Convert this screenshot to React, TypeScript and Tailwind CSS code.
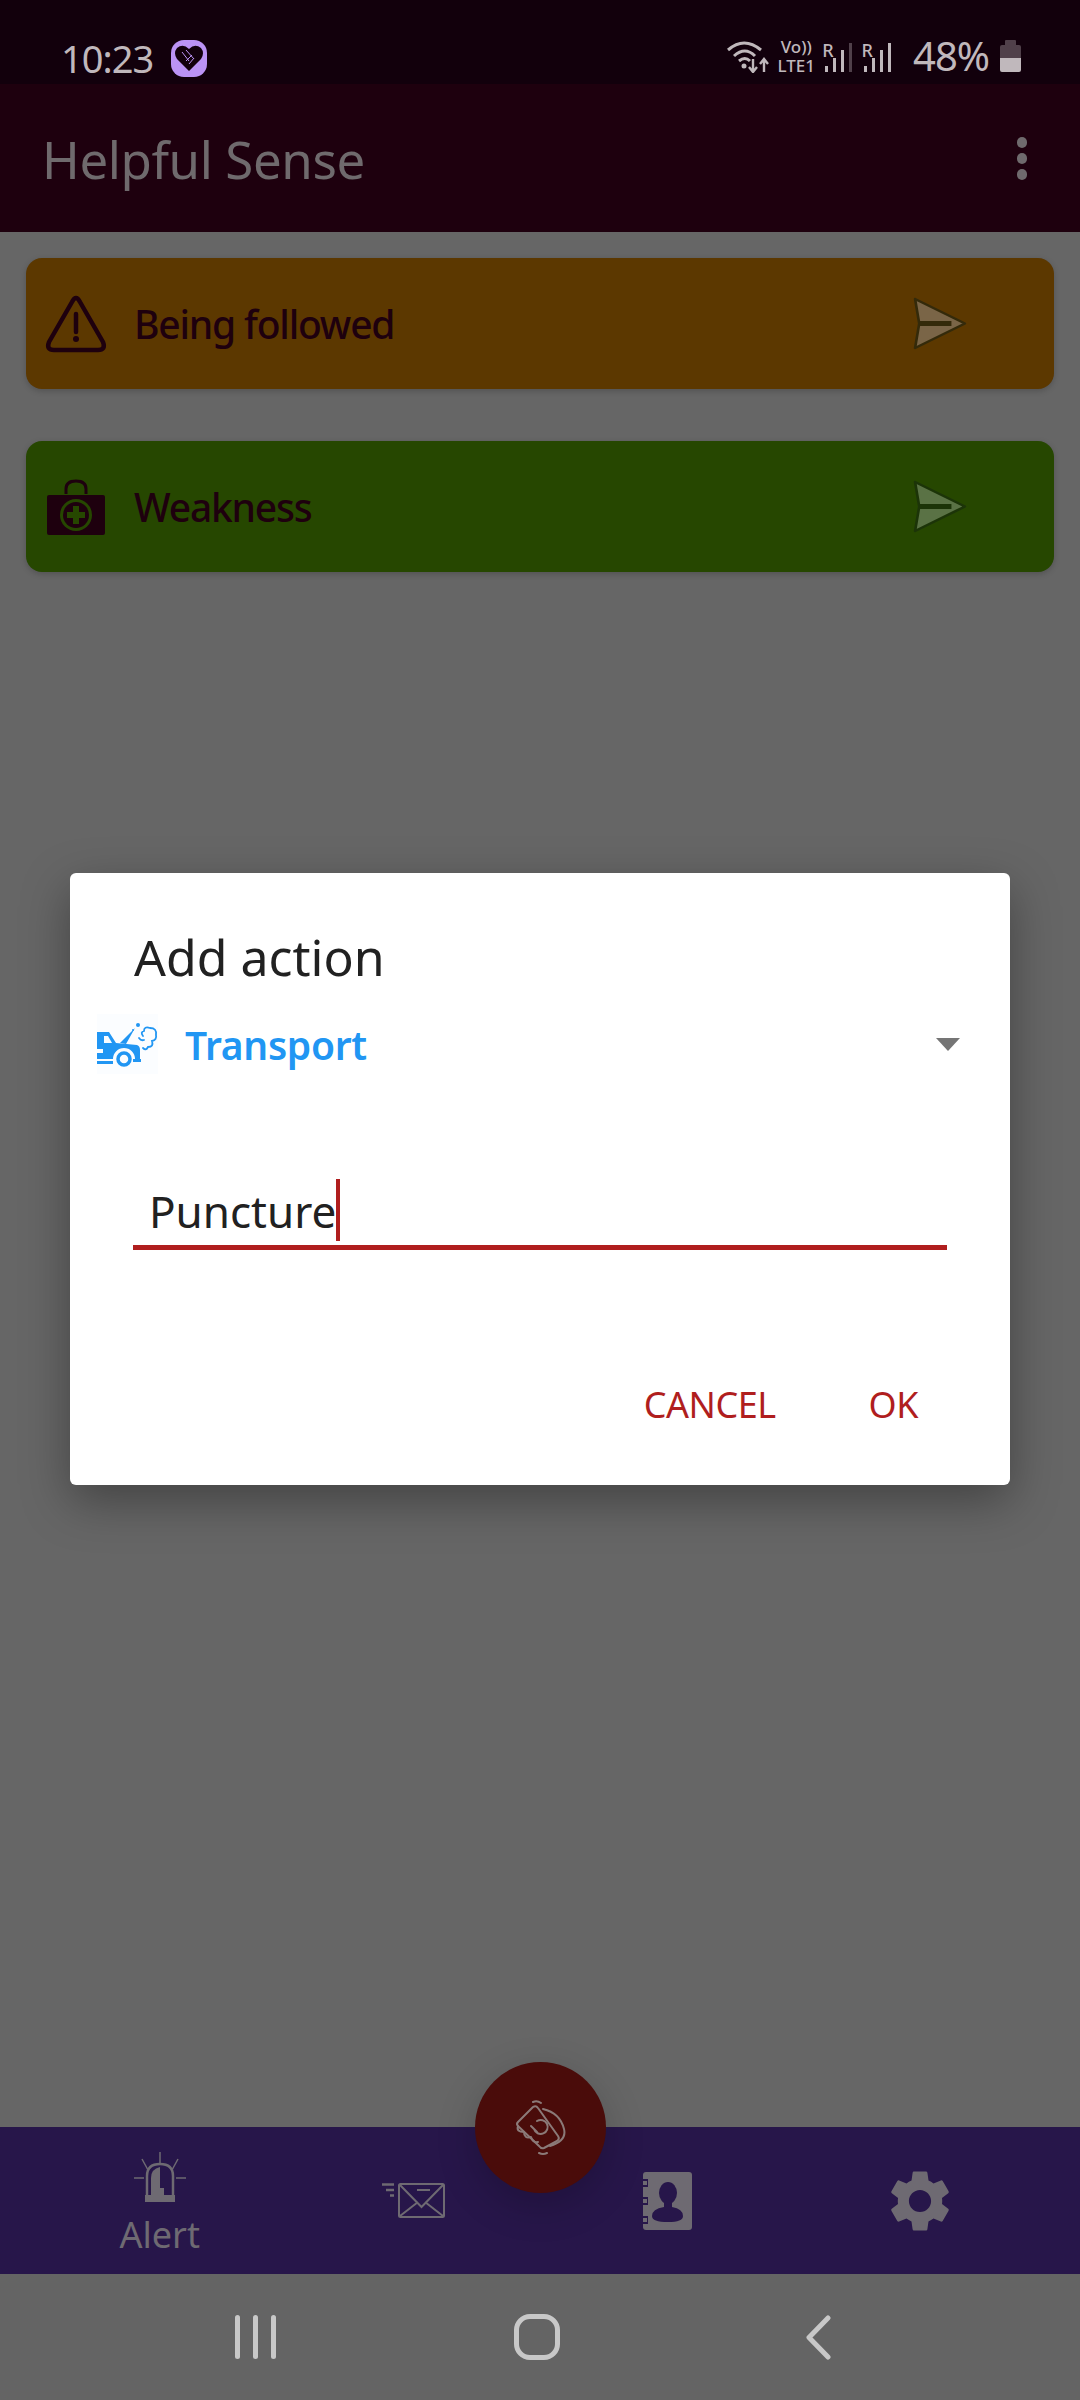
import { MdSettings } from 'react-icons/md'

const FONT = "font-['Noto_Sans',sans-serif]"

const SendIcon = ({ fill, stroke }: { fill: string; stroke: string }) => (
  <svg width="54" height="53" viewBox="0 0 52 53" preserveAspectRatio="none">
    <path d="M2 2 L50 26.5 L2 51 L6 26.5 Z" fill={fill} stroke={stroke} strokeWidth="2.5" strokeLinejoin="round" />
    <path d="M6 26.5 H37" stroke={stroke} strokeWidth="5" />
  </svg>
)

const WarningIcon = () => (
  <svg width="62" height="58" viewBox="0 0 62 58" fill="none">
    <path d="M31 3 Q33 3 35 7 L58 47 Q61 55 53 55 H9 Q1 55 4 47 L27 7 Q29 3 31 3 Z" stroke="#1e000e" strokeWidth="4.5" strokeLinejoin="round" />
    <path d="M31 19 V37" stroke="#1e000e" strokeWidth="4.5" strokeLinecap="round" />
    <circle cx="31" cy="44" r="3" fill="#1e000e" />
  </svg>
)

const MedicalIcon = () => (
  <svg width="60" height="56" viewBox="0 0 60 56" fill="none">
    <path d="M20 15 V10 Q20 2 30 2 Q40 2 40 10 V15" stroke="#1e000e" strokeWidth="3" />
    <rect x="1" y="16" width="58" height="40" rx="2" fill="#1e000e" />
    <circle cx="30" cy="36" r="16" fill="#264700" />
    <circle cx="30" cy="36" r="13" fill="#1e000e" />
    <path d="M30 27 V45 M21 36 H39" stroke="#264700" strokeWidth="6" />
  </svg>
)

const CarIcon = () => (
  <svg width="61" height="60" viewBox="0 0 61 60" fill="none" className="bg-[#fbfdff]">
    <path d="M0 18 H12 L19 29 L40 31 Q43 32 43 36 V45 H38 A11 11 0 0 0 16 45 H0 V39 H6 V35 H0 Z" fill="#2196f3" />
    <path d="M7 22 H11 L15 29 H7 Z" fill="#fbfdff" />
    <path d="M0 47 H16 V50 H0 Z M36 45 H44 V48 H36 Z" fill="#2196f3" />
    <circle cx="27" cy="45" r="6" stroke="#2196f3" strokeWidth="3.5" />
    <path d="M23 29 L38 14 L29 30 Z" fill="#2196f3" />
    <circle cx="41" cy="11" r="2" fill="#2196f3" />
    <circle cx="36" cy="16" r="1" fill="#2196f3" />
    <path d="M46 22 Q43 18 47 17 Q47 12 53 14 Q60 14 59 21 Q60 26 55 27 Q57 33 51 33 Q49 37 46 34 M42 24 Q44 27 47 26" stroke="#2196f3" strokeWidth="1.8" strokeLinecap="round" />
  </svg>
)

const SirenIcon = () => (
  <svg width="52" height="50" viewBox="0 0 52 50" fill="none" stroke="#6e6a72">
    <path d="M26 0 V12 M8 7 L14 18 M44 7 L38 18 M0 26 H10 M42 26 H52" strokeWidth="1.5" />
    <path d="M13 43 V24 Q13 12 26 12 Q39 12 39 24 V43" strokeWidth="2.5" fill="#27164a" />
    <path d="M17 43 V26 Q17 17 26 15 V36 H30 V43 Z" fill="#6e6a72" stroke="none" />
    <rect x="11" y="43" width="30" height="7" fill="#6e6a72" stroke="none" />
  </svg>
)

const MailIcon = () => (
  <svg width="63" height="35" viewBox="0 0 63 35" fill="none" stroke="#6e6a72">
    <rect x="17" y="1" width="45" height="33" rx="1.5" strokeWidth="2" />
    <path d="M18 2 L39.5 24 L61 2 M18 33 L36 19 M61 33 L43 19 M35 7 H48" strokeWidth="2" />
    <path d="M0 1.5 H12 M4 7 H12 M8 12.5 H12" strokeWidth="2.5" />
  </svg>
)

const ContactsIcon = () => (
  <svg width="50" height="60" viewBox="0 0 50 60">
    <rect x="1" y="1" width="49" height="58" rx="3" fill="#6e6a72" />
    <path d="M0 8 H6 V16 H0 Z M0 26 H6 V34 H0 Z M0 45 H6 V53 H0 Z" fill="#27164a" />
    <rect x="1" y="10" width="4" height="4" fill="#6e6a72" />
    <rect x="1" y="28" width="4" height="4" fill="#6e6a72" />
    <rect x="1" y="47" width="4" height="4" fill="#6e6a72" />
    <ellipse cx="26" cy="22" rx="9" ry="11" fill="#27164a" />
    <path d="M22 30 H30 V36 Q41 38 41 45 Q41 51 26 51 Q10 51 10 45 Q10 38 22 36 Z" fill="#27164a" />
  </svg>
)

const ShakeIcon = () => (
  <svg width="54" height="58" viewBox="0 0 54 58" fill="none" stroke="#8b7a78" strokeWidth="2" strokeLinecap="round" strokeLinejoin="round">
    <path d="M19 3 Q23 1 27 4 M25 54 Q29 56 33 54" />
    <path d="M4 23 L19 8 Q22 6 24 9 L44 37 Q46 40 43 42 L30 49 Q27 50 25 47 L4 27 Q2 25 4 23 Z" />
    <path d="M29 10 Q46 14 50 30 Q53 42 36 47" />
    <path d="M4 27 Q2 33 10 33 Q10 40 17 38 Q19 44 24 43" />
    <path d="M23 22 A7 7 0 1 1 20 30 M20 30 L17 27 M20 30 L23 33" />
  </svg>
)

const HandshakeBadge = () => (
  <div className="flex h-[37px] w-[36px] items-center justify-center rounded-[13px] bg-[#bb93f5]">
    <svg width="30" height="30" viewBox="0 0 30 30">
      <path d="M15 28 L3 16 Q-1 10 3 5 Q9 0 15 6 Q21 0 27 5 Q31 10 27 16 Z" fill="#12000c" />
      <path d="M8 9 L15 18 M12 7 L20 16 M15 21 L20 15 M12 18 L18 12" stroke="#bb93f5" strokeWidth="1" fill="none" />
    </svg>
  </div>
)

const SignalBars = ({ dimLast }: { dimLast?: boolean }) => (
  <div className="ml-[-9px] flex items-end gap-[5px]">
    <div className="h-[6px] w-[3px] bg-[#c0b8bc]" />
    <div className="h-[14px] w-[3px] bg-[#c0b8bc]" />
    <div className="h-[22px] w-[3px] bg-[#c0b8bc]" />
    <div className={`h-[29px] w-[3px] ${dimLast ? 'bg-[#50404a]' : 'bg-[#c0b8bc]'}`} />
  </div>
)

const StatusBar = () => (
  <div className="flex h-[84px] items-center justify-between bg-[#12000c] pt-[32px] pr-[59px] pl-[61px] text-[#c0b8bc]">
    <div className="flex items-center gap-[18px]">
      <span className="text-[38px] leading-none tracking-[-1px]">10:23</span>
      <HandshakeBadge />
    </div>
    <div className="mt-[-4px] flex items-center">
      <svg width="42" height="34" viewBox="0 0 42 34" fill="none" stroke="#c0b8bc" strokeWidth="3">
        <path d="M1 11 Q17 -3 34 11 M7 17 Q18 7 28 17 M12 22 Q18 17 23 22" />
        <circle cx="17" cy="27" r="2.5" fill="#c0b8bc" stroke="none" />
        <path d="M26 20 V33 M22 28 L26 33 L30 28 M37 33 V20 M33 25 L37 20 L41 25" strokeWidth="2.4" />
      </svg>
      <div className="ml-[8px] flex w-[38px] flex-col items-center text-[17px] leading-[19px] font-medium">
        <span>Vo))</span>
        <span>LTE1</span>
      </div>
      <div className="ml-[7px] flex items-end">
        <span className="mb-[13px] text-[18px] leading-[18px] font-medium">R</span>
        <SignalBars dimLast />
      </div>
      <div className="ml-[10px] flex items-end">
        <span className="mb-[13px] text-[18px] leading-[18px] font-medium">R</span>
        <SignalBars />
      </div>
      <span className="ml-[22px] text-[40px] leading-none tracking-[-1px]">48%</span>
      <div className="ml-[11px] flex flex-col items-center">
        <div className="h-[5px] w-[11px] rounded-t-[1px] bg-[#50404a]" />
        <div className="h-[13px] w-[21px] rounded-t-[2px] bg-[#50404a]" />
        <div className="h-[14px] w-[21px] rounded-b-[2px] bg-[#c0b8bc]" />
      </div>
    </div>
  </div>
)

const AppBar = () => (
  <div className="flex h-[148px] items-center justify-between bg-[#1e000e] pr-[53px] pl-[42px]">
    <span className="mt-[2px] text-[51px] leading-none tracking-[-0.4px] text-[#6f6a6d]">Helpful Sense</span>
    <div className="flex flex-col gap-[5px]">
      <div className="h-[11px] w-[10px] rounded-full bg-[#6f6a6d]" />
      <div className="h-[11px] w-[10px] rounded-full bg-[#6f6a6d]" />
      <div className="h-[11px] w-[10px] rounded-full bg-[#6f6a6d]" />
    </div>
  </div>
)

const ActionCard = ({ label, bg, sendFill, sendStroke, icon }: {
  label: string
  bg: string
  sendFill: string
  sendStroke: string
  icon: React.ReactNode
}) => (
  <div className={`flex h-[131px] items-center justify-between rounded-[16px] pr-[87px] pl-[19px] shadow-[0_2px_6px_rgba(0,0,0,0.2)] ${bg}`}>
    <div className="flex items-center">
      <div className="flex w-[62px] justify-center">{icon}</div>
      <span className="ml-[27px] text-[39px] leading-none font-medium tracking-[-1.2px] text-[#1e000e]">{label}</span>
    </div>
    <SendIcon fill={sendFill} stroke={sendStroke} />
  </div>
)

const BottomNav = () => (
  <div className="grid h-[147px] grid-cols-4 items-center bg-[#27164a] px-[33px]">
    <div className="flex flex-col items-center pt-[6px]">
      <SirenIcon />
      <span className="mt-[13px] text-[36px] leading-[40px] text-[#6e6a72]">Alert</span>
    </div>
    <div className="flex justify-center"><MailIcon /></div>
    <div className="flex justify-center"><ContactsIcon /></div>
    <div className="flex justify-center"><MdSettings size={74} color="#6e6a72" /></div>
  </div>
)

const SystemNav = () => (
  <div className="grid h-[126px] grid-cols-3 items-center bg-[#646464] pr-[121px] pl-[115px]">
    <div className="flex justify-center gap-[13px]">
      <div className="h-[44px] w-[5px] rounded-full bg-[#c8c8c8]" />
      <div className="h-[44px] w-[5px] rounded-full bg-[#c8c8c8]" />
      <div className="h-[44px] w-[5px] rounded-full bg-[#c8c8c8]" />
    </div>
    <div className="flex justify-center">
      <div className="h-[46px] w-[46px] rounded-[16px] border-[5px] border-[#c8c8c8]" />
    </div>
    <div className="flex justify-center">
      <svg width="26" height="45" viewBox="0 0 26 45" fill="none">
        <path d="M23 3 L4 22.5 L23 42" stroke="#c8c8c8" strokeWidth="5" strokeLinecap="round" strokeLinejoin="round" />
      </svg>
    </div>
  </div>
)

const AddActionDialog = () => (
  <div className="absolute top-[873px] left-[70px] flex h-[612px] w-[940px] flex-col rounded-[6px] bg-white shadow-[0_16px_48px_rgba(0,0,0,0.35)]">
    <div className="mt-[54px] pl-[64px] text-[50px] leading-[60px] text-[#212121]">Add action</div>
    <div className="mt-[27px] flex items-center pr-[50px] pl-[27px]">
      <CarIcon />
      <span className="ml-[27px] text-[39px] leading-none font-semibold tracking-[-0.3px] text-[#2196f3]">Transport</span>
      <div className="ml-auto h-0 w-0 border-x-[12px] border-t-[13px] border-x-transparent border-t-[#757575]" />
    </div>
    <div className="mx-[63px] mt-[105px] flex h-[71px] items-start border-b-[5px] border-[#b01e1e] pl-[16px]">
      <span className="mt-[10px] text-[44px] leading-none text-[#212121]">Puncture</span>
      <div className="h-[62px] w-[4px] bg-[#b01e1e]" />
    </div>
    <div className="mt-[137px] flex justify-end pr-[92px] text-[36px] leading-none tracking-[-0.5px] text-[#b01e1e]">
      <span>CANCEL</span>
      <span className="ml-[93px]">OK</span>
    </div>
  </div>
)

export default function App() {
  return (
    <div className={`relative flex h-[2400px] w-[1080px] flex-col overflow-hidden bg-[#666666] ${FONT}`}>
      <StatusBar />
      <AppBar />
      <div className="flex flex-1 flex-col gap-[52px] px-[26px] pt-[26px]">
        <ActionCard label="Being followed" bg="bg-[#5c3800]" sendFill="#7a6547" sendStroke="#342a0a" icon={<WarningIcon />} />
        <ActionCard label="Weakness" bg="bg-[#264700]" sendFill="#5a7245" sendStroke="#1c3408" icon={<MedicalIcon />} />
      </div>
      <BottomNav />
      <SystemNav />
      <div className="absolute top-[2062px] left-[475px] flex h-[131px] w-[131px] items-center justify-center rounded-full bg-[#4a0c0a] shadow-[0_12px_40px_rgba(0,0,0,0.2)]">
        <ShakeIcon />
      </div>
      <AddActionDialog />
    </div>
  )
}
